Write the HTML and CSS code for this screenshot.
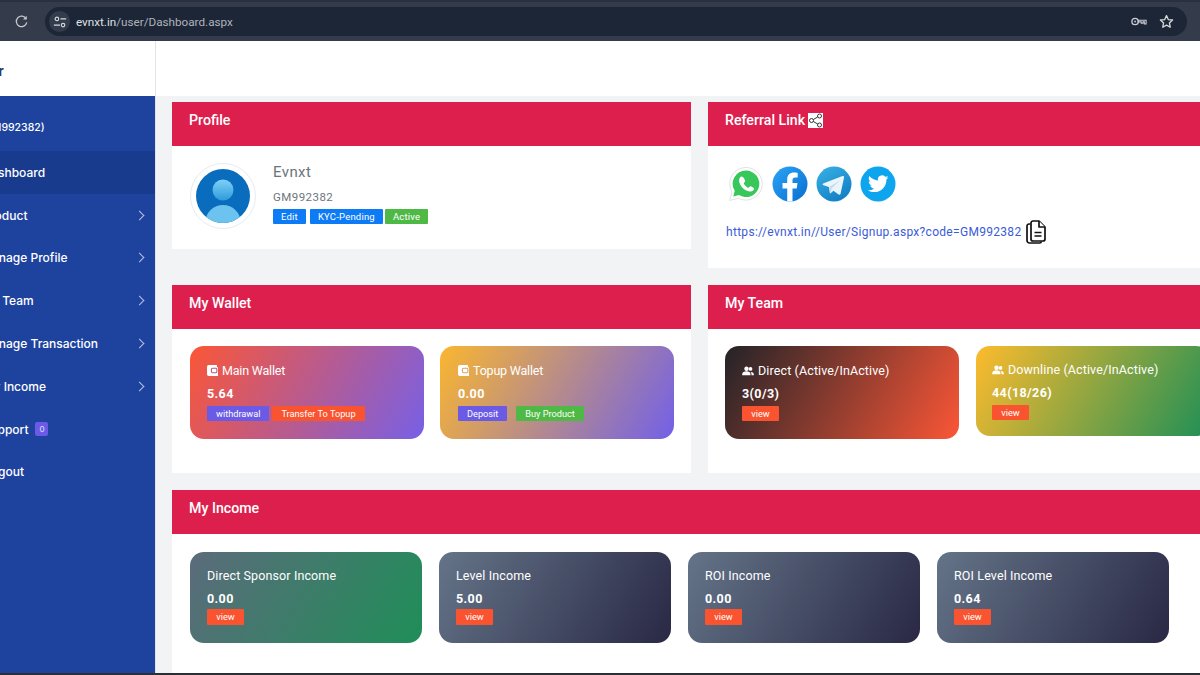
FILE: index.html
```html
<!DOCTYPE html>
<html lang="en">
<head>
<meta charset="utf-8">
<title>Dashboard</title>
<link rel="stylesheet" href="styles.css">
</head>
<body>
<div class="chrome">
  <svg class="reload" viewBox="0 0 16 16" width="15" height="15"><path d="M13 5.200A5.600 5.600 0 1 0 13.600 9" fill="none" stroke="#c4c7cc" stroke-width="1.400"/><path d="M13.600 1.800v4h-4z" fill="#c4c7cc"/></svg>
  <div class="omnibox">
    <span class="tune"><svg viewBox="0 0 16 16" width="14" height="14"><circle cx="4.500" cy="4.500" r="2" fill="none" stroke="#d5d7db" stroke-width="1.300"/><path d="M8.500 4.500H15M1 11.500h7" stroke="#d5d7db" stroke-width="1.300"/><circle cx="11.500" cy="11.500" r="2" fill="none" stroke="#d5d7db" stroke-width="1.300"/></svg></span>
    <span class="url"><span class="url-host">evnxt.in</span>/user/Dashboard.aspx</span>
    <svg class="key" viewBox="0 0 18 12" width="16" height="11"><circle cx="4.600" cy="6" r="3.600" fill="none" stroke="#c9ccd2" stroke-width="1.500"/><circle cx="4.600" cy="6" r="1" fill="#c9ccd2"/><path d="M8 4.600h9v4.200h-2V6.400h-1.500v1.600h-2V6.400H8z" fill="none" stroke="#c9ccd2" stroke-width="1.200"/></svg>
    <svg class="star" viewBox="0 0 16 16" width="15" height="15"><path d="M8 1.700l1.900 4.200 4.600.5-3.400 3.100.9 4.600L8 11.800l-4 2.300.9-4.600L1.500 6.400l4.600-.5z" fill="none" stroke="#d5d7db" stroke-width="1.400" stroke-linejoin="round"/></svg>
  </div>
</div>
<div class="app">
  <aside class="side">
    <div class="brand"><span class="brand-text">User</span></div>
    <nav class="nav">
      <div class="user-row"><span class="user-label">Evnxt (GM992382)</span></div>
      <div class="item active"><span class="label">Dashboard</span></div>
      <div class="item"><span class="label">Product</span><span class="chev"></span></div>
      <div class="item"><span class="label label-far">Manage Profile</span><span class="chev"></span></div>
      <div class="item"><span class="label label-far">My Team</span><span class="chev"></span></div>
      <div class="item"><span class="label label-far">Manage Transaction</span><span class="chev"></span></div>
      <div class="item"><span class="label">My Income</span><span class="chev"></span></div>
      <div class="item"><span class="label">Support</span><span class="badge">0</span></div>
      <div class="item"><span class="label label-near">Logout</span></div>
    </nav>
  </aside>
  <div class="page">
    <header class="topbar"></header>
    <main class="content">
      <section class="panel panel-profile">
        <h2 class="panel-head">Profile</h2>
        <div class="profile-body">
          <div class="avatar-ring">
            <svg viewBox="0 0 54 54" width="54" height="54"><defs><clipPath id="av"><circle cx="27" cy="27" r="27"/></clipPath><linearGradient id="avg" x1="0" y1="0" x2="0" y2="1"><stop offset="0" stop-color="#7fd0f5"/><stop offset="1" stop-color="#2d9bdd"/></linearGradient></defs><circle cx="27" cy="27" r="27" fill="#0a6cbd"/><g clip-path="url(#av)"><circle cx="27" cy="21" r="10.500" fill="url(#avg)"/><ellipse cx="27" cy="53" rx="17.500" ry="17" fill="#6cc3ef"/></g></svg>
          </div>
          <div class="profile-info">
            <div class="profile-name">Evnxt</div>
            <div class="profile-id">GM992382</div>
            <div class="tags">
              <span class="tag tag-blue">Edit</span>
              <span class="tag tag-blue">KYC-Pending</span>
              <span class="tag tag-green">Active</span>
            </div>
          </div>
        </div>
      </section>
      <section class="panel panel-ref">
        <h2 class="panel-head">Referral Link
          <svg class="share" viewBox="0 0 15 15" width="15" height="15"><rect width="15" height="15" fill="#fff"/><g fill="none" stroke="#222" stroke-width=".9"><circle cx="11.500" cy="3" r="2"/><circle cx="3.500" cy="7.500" r="2"/><circle cx="11.500" cy="12" r="2"/><path d="M9.700 4 5.300 6.500M5.300 8.500l4.400 2.500"/></g></svg>
        </h2>
        <div class="ref-body">
          <div class="socials">
            <svg viewBox="0 0 36 36" width="36" height="36"><path d="M18 1.500A16.300 16.300 0 0 0 4 26L1.500 34.500 10.300 32.200A16.300 16.300 0 1 0 18 1.500z" fill="#fff" stroke="#dfe2e3"/><path d="M18 4.500A13.300 13.300 0 0 0 6.700 24.800L5.300 30.500 11 29.100A13.300 13.300 0 1 0 18 4.500z" fill="#37c75a"/><path d="M13.500 10.500c-.8 0-2.400 1.300-2.400 3.900 0 5 6 11.100 11.300 11.100 2.300 0 3.700-1.700 3.700-3 0-.6-3-2.300-3.700-2.300-.7 0-1.200 1.600-2 1.600-1.200 0-4.600-3.300-4.600-4.600 0-.8 1.400-1.300 1.400-2 0-.8-1.600-4.700-3.700-4.700z" fill="#fff"/></svg>
            <svg viewBox="0 0 36 36" width="36" height="36"><defs><linearGradient id="fb" x1="0" y1="0" x2="1" y2="1"><stop offset="0" stop-color="#2aa4f4"/><stop offset="1" stop-color="#0a6ed1"/></linearGradient><clipPath id="fbc"><circle cx="18" cy="18" r="17.500"/></clipPath></defs><circle cx="18" cy="18" r="17.500" fill="url(#fb)"/><path clip-path="url(#fbc)" d="M15.200 36V22.500h-4.700v-5.400h4.700v-3.700c0-4.400 2.700-6.900 6.700-6.900 1.300 0 2.700.2 3.800.4v4.500h-2.300c-2.200 0-2.900 1.400-2.900 2.700v2.900h5l-.8 5.400h-4.200V36z" fill="#fff"/></svg>
            <svg viewBox="0 0 36 36" width="36" height="36"><defs><linearGradient id="tg" x1=".2" y1="0" x2=".8" y2="1"><stop offset="0" stop-color="#37aee2"/><stop offset="1" stop-color="#0f7cc4"/></linearGradient></defs><circle cx="18" cy="18" r="17.500" fill="url(#tg)"/><path d="M6.500 17.800 26.500 10c1-.3 1.800.3 1.500 1.700l-3.400 15.900c-.2 1.200-1 1.400-2 .9l-5.200-3.800-2.500 2.400c-.6.600-1 .5-1.100-.3l-.9-5.900-5.400-1.700c-1.200-.4-1.200-1.100 0-1.400z" fill="#e9f5fb"/><path d="M13.600 20.800l.7 6.400 1.400-4.900 8.500-8z" fill="#c8daea"/></svg>
            <svg viewBox="0 0 36 36" width="36" height="36"><circle cx="18" cy="18" r="17.500" fill="#0ea5ef"/><path d="M28.500 11.300c-.8.300-1.600.6-2.400.7.900-.5 1.500-1.300 1.800-2.300-.8.500-1.700.9-2.700 1a4.200 4.200 0 0 0-7.200 3.800c-3.500-.2-6.600-1.800-8.700-4.400-1.100 1.900-.6 4.400 1.300 5.600-.7 0-1.300-.2-1.900-.5 0 2 1.400 3.800 3.400 4.200-.6.200-1.300.2-1.900.1.500 1.700 2.100 2.900 3.900 2.900A8.500 8.500 0 0 1 7.800 24.200c1.900 1.200 4.100 1.900 6.500 1.900 7.900 0 12.300-6.700 12.100-12.700.8-.6 1.500-1.300 2.100-2.100z" fill="#fff"/></svg>
          </div>
          <div class="ref-link">
            <span class="link">https://evnxt.in//User/Signup.aspx?code=GM992382</span>
            <svg viewBox="0 0 20 24" width="20" height="24"><g fill="#fff" stroke="#111" stroke-width="1.700" stroke-linejoin="round"><path d="M4.500 4H3a2 2 0 0 0-2 2v14.500a2.500 2.500 0 0 0 2.500 2.500h10a2 2 0 0 0 2-1.600"/><path d="M5 3a2 2 0 0 1 2-2h6l6 6v12a2 2 0 0 1-2 2H7a2 2 0 0 1-2-2z"/><path d="M13 1v6h6"/></g><path d="M8.500 12.500h7M8.500 16h7" stroke="#111" stroke-width="1.500"/></svg>
          </div>
        </div>
      </section>
      <section class="panel panel-mid">
        <h2 class="panel-head">My Wallet</h2>
        <div class="cards">
          <article class="stat g-wallet">
            <h3 class="stat-title title-tight"><svg viewBox="1 1 10 10" width="11" height="11"><path d="M1 2.500A1.500 1.500 0 0 1 2.500 1H10v2h1v8H2.500A1.500 1.500 0 0 1 1 9.500z" fill="#fff"/><rect x="5" y="4" width="5" height="4" rx="1" fill="none" stroke="#b9587e"/></svg> Main Wallet</h3>
            <div class="stat-value">5.64</div>
            <div class="btns"><span class="btn btn-violet">withdrawal</span><span class="btn btn-orange">Transfer To Topup</span></div>
          </article>
          <article class="stat stat-topup g-topup">
            <h3 class="stat-title title-tight"><svg viewBox="1 1 10 10" width="11" height="11"><path d="M1 2.500A1.500 1.500 0 0 1 2.500 1H10v2h1v8H2.500A1.500 1.500 0 0 1 1 9.500z" fill="#fff"/><rect x="5" y="4" width="5" height="4" rx="1" fill="none" stroke="#d9a366"/></svg> Topup Wallet</h3>
            <div class="stat-value">0.00</div>
            <div class="btns btns-wide"><span class="btn btn-violet">Deposit</span><span class="btn btn-green">Buy Product</span></div>
          </article>
        </div>
      </section>
      <section class="panel panel-mid panel-team">
        <h2 class="panel-head">My Team</h2>
        <div class="cards cards-team">
          <article class="stat g-direct">
            <h3 class="stat-title"><svg viewBox="0 0 12 9.500" width="12" height="10"><circle cx="4.500" cy="2.500" r="2.200" fill="#fff"/><circle cx="8.500" cy="2.700" r="1.900" fill="#fff"/><path d="M.2 9V8c0-2 2-3 4.300-3s4 1 4 3v1zM9.500 9V8c0-1-.4-1.800-1-2.300 1.700-.1 3.300.8 3.300 2.300v1z" fill="#fff"/></svg> Direct (Active/InActive)</h3>
            <div class="stat-value">3(0/3)</div>
            <div class="btns"><span class="btn btn-orange btn-view">view</span></div>
          </article>
          <article class="stat stat-short g-down">
            <h3 class="stat-title"><svg viewBox="0 0 12 9.500" width="12" height="10"><circle cx="4.500" cy="2.500" r="2.200" fill="#fff"/><circle cx="8.500" cy="2.700" r="1.900" fill="#fff"/><path d="M.2 9V8c0-2 2-3 4.300-3s4 1 4 3v1zM9.500 9V8c0-1-.4-1.800-1-2.300 1.700-.1 3.300.8 3.300 2.300v1z" fill="#fff"/></svg> Downline (Active/InActive)</h3>
            <div class="stat-value">44(18/26)</div>
            <div class="btns"><span class="btn btn-orange btn-view">view</span></div>
          </article>
        </div>
      </section>
      <section class="panel panel-income">
        <h2 class="panel-head">My Income</h2>
        <div class="cards cards-income">
          <article class="stat stat-inc g-sponsor">
            <h3 class="stat-title">Direct Sponsor Income</h3>
            <div class="stat-value">0.00</div>
            <div class="btns"><span class="btn btn-orange btn-view">view</span></div>
          </article>
          <article class="stat stat-inc g-slate">
            <h3 class="stat-title">Level Income</h3>
            <div class="stat-value">5.00</div>
            <div class="btns"><span class="btn btn-orange btn-view">view</span></div>
          </article>
          <article class="stat stat-inc g-slate">
            <h3 class="stat-title">ROI Income</h3>
            <div class="stat-value">0.00</div>
            <div class="btns"><span class="btn btn-orange btn-view">view</span></div>
          </article>
          <article class="stat stat-inc g-slate">
            <h3 class="stat-title">ROI Level Income</h3>
            <div class="stat-value">0.64</div>
            <div class="btns"><span class="btn btn-orange btn-view">view</span></div>
          </article>
        </div>
      </section>
    </main>
  </div>
</div>
<div class="screen-edge"></div>
</body>
</html>
```
FILE: styles.css
```css
* { box-sizing: border-box; }
html, body { margin: 0; height: 675px; overflow: hidden; }
body { font-family: "Roboto", "Liberation Sans", sans-serif; background: #fff; display: flex; flex-direction: column; }

.chrome { height: 41px; background: #343c4c; border-top: 2px solid #2a303d; display: flex; align-items: center; padding-left: 14px; flex: none; }
.reload { flex: none; margin-right: 16px; }
.omnibox { width: 1142px; height: 29px; background: #1d2636; border-radius: 15px; display: flex; align-items: center; padding-left: 4px; padding-right: 13px; }
.tune { width: 21px; height: 21px; border-radius: 50%; background: #333c4c; display: flex; align-items: center; justify-content: center; margin-right: 6px; }
.url { font-size: 11.700px; color: #aeb3bb; flex: 1; }
.url-host { color: #dfe1e5; }
.key { margin-right: 12px; }

.app { flex: 1; display: flex; min-height: 0; }
.side { width: 156px; flex: none; display: flex; flex-direction: column; overflow: hidden; border-right: 1px solid #dfe3ea; }
.brand { height: 55px; flex: none; background: #fff; display: flex; align-items: center; padding-top: 4px; }
.brand-text { margin-left: -26px; font: 700 13px "Inter", sans-serif; color: #2c3e63; }
.nav { flex: 1; background: #1e439f; color: #fff; font: 500 12px "Inter", sans-serif; }
.user-row { height: 55px; display: flex; align-items: center; padding-top: 8px; white-space: nowrap; }
.user-label { margin-left: -51px; font-size: 10.500px; }
.item { height: 42.800px; display: flex; align-items: center; padding-right: 12px; white-space: nowrap; }
.item.active { background: #183b8e; }
.label { margin-left: -17.500px; }
.label-far { margin-left: -19px; }
.label-near { margin-left: -16px; }
.chev { width: 7px; height: 7px; border-top: 1px solid #b6c3e2; border-right: 1px solid #b6c3e2; transform: rotate(45deg); margin-left: auto; }
.badge { margin-left: 7px; width: 13px; height: 14px; background: #6a5ae6; border-radius: 2px; font-size: 8px; display: flex; align-items: center; justify-content: center; color: #cfd6ff; }

.page { flex: 1; min-width: 0; display: flex; flex-direction: column; overflow: hidden; background: #f2f3f5; }
.topbar { height: 55px; flex: none; background: #fff; }
.content { width: 1071px; padding: 6px 0 0 16px; display: grid; grid-template-columns: 519px 519px; column-gap: 17px; align-content: start; align-items: start; }
.panel { background: #fff; }
.panel-head { margin: 0; height: 44px; background: #dd1f4e; color: #fff; font-size: 14.200px; font-weight: 500; line-height: 36px; padding-left: 17px; display: flex; align-items: flex-start; gap: 3px; }
.panel-profile { height: 147px; }
.panel-ref { height: 166px; }
.panel-mid { height: 188px; grid-row: 2; }
.panel-income { grid-column: 1 / 3; height: 190px; margin-top: 17px; }
.panel-profile, .panel-ref { grid-row: 1; margin-bottom: 17px; }
.share { margin-top: 11px; }

.profile-body { display: flex; padding: 17px 18px; height: 103px; }
.avatar-ring { width: 66px; height: 66px; border: 1px solid #e8ebef; border-radius: 50%; display: flex; align-items: center; justify-content: center; flex: none; }
.profile-info { margin-left: 17px; color: #6c757d; }
.profile-name { font-size: 15px; letter-spacing: .4px; line-height: 18px; }
.profile-id { font-size: 11.500px; letter-spacing: .45px; line-height: 14px; margin-top: 9px; }
.tags { display: flex; gap: 4px; margin-top: 5px; }
.tag { height: 15px; font-size: 9.500px; line-height: 15px; padding: 0 8px; color: #fff; border-radius: 1px; letter-spacing: .2px; }
.tag-blue { background: #0d7bf5; }
.tag-green { background: #4fb946; margin-left: -2px; }

.ref-body { padding: 20px 17px 0 18px; }
.socials { display: flex; gap: 8px; padding-left: 2px; }
.ref-link { display: flex; align-items: center; gap: 5px; margin-top: 18px; }
.link { font-size: 12px; color: #3a5bd9; letter-spacing: .3px; }

.cards { display: flex; gap: 16.500px; padding: 17px 17px 0 18px; align-items: flex-start; }
.cards-team { padding-left: 17px; gap: 17.500px; }
.stat { width: 233.500px; height: 93px; border-radius: 14px; color: #fff; padding: 17px 17px 0; flex: none; }
.stat-topup { padding-left: 18px; }
.stat-short { height: 90px; padding: 16px 16px 0; }
.stat-inc { width: 232px; height: 91px; padding-top: 16px; }
.stat-title { margin: 0; font-size: 12.500px; font-weight: 400; line-height: 15px; display: flex; align-items: center; gap: 4px; white-space: nowrap; letter-spacing: .12px; }
.title-tight { letter-spacing: -.2px; }
.stat-value { font-size: 12.500px; font-weight: 700; line-height: 15px; margin-top: 8px; letter-spacing: .4px; }
.btns { display: flex; gap: 3px; margin-top: 5px; }
.stat-inc .btns { margin-top: 3px; }
.stat-inc .btn { height: 16px; line-height: 16px; }
.btns-wide { gap: 9px; }
.btn { height: 15px; font-size: 9.200px; line-height: 15px; padding: 0 9px; border-radius: 1px; white-space: nowrap; }
.btn-view { width: 37px; text-align: center; padding: 0; }
.btn-violet { background: #6a5ae6; }
.btn-orange { background: #fa5330; }
.btn-green { background: #4fb946; }

.g-wallet { background: linear-gradient(120deg, #fb5636, #7760e6); }
.g-topup { background: linear-gradient(120deg, #fab62f, #7260e8); }
.g-direct { background: linear-gradient(120deg, #232328, #fb5636); }
.g-down { background: linear-gradient(120deg, #fdbb2d, #1e8f56); }
.g-sponsor { background: linear-gradient(120deg, #5b6b7b, #1f8e58); }
.g-slate { background: linear-gradient(120deg, #647488, #292845); }

.cards-income { padding-top: 18px; gap: 17px; }

.screen-edge { height: 2px; flex: none; background: #2b2e33; }
```
